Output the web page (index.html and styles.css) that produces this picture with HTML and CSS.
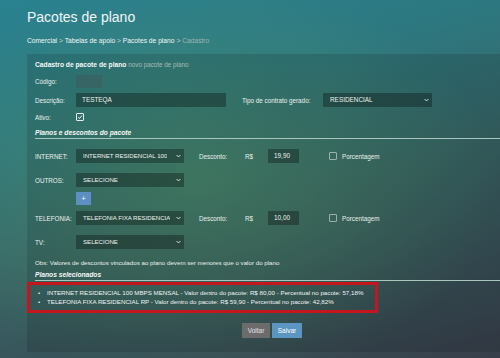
FILE: index.html
```html
<!DOCTYPE html>
<html lang="pt-BR">
<head>
    <meta charset="UTF-8">
    <title>Pacotes de plano - Cadastro</title>
    <link rel="stylesheet" href="styles.css">
</head>
<body>
    <div class="page">
        <h1>Pacotes de plano</h1>
        <div class="breadcrumb">
            <a href="#">Comercial</a> <span class="sep">&gt;</span>
            <a href="#">Tabelas de apoio</a> <span class="sep">&gt;</span>
            <a href="#">Pacotes de plano</a> <span class="sep">&gt;</span>
            <span class="atual">Cadastro</span>
        </div>

        <div class="panel">
            <div class="panel-title">Cadastro de pacote de plano <small>novo pacote de plano</small></div>

            <div class="row row-codigo">
                <label>Código:</label>
                <div class="input input-codigo"></div>
            </div>

            <div class="row row-descricao">
                <label>Descrição:</label>
                <div class="input input-descricao">TESTEQA</div>
                <label class="label-tipo">Tipo de contrato gerado:</label>
                <div class="select select-tipo"><span>RESIDENCIAL</span><svg viewBox="0 0 8 6"><path d="M1 1.5 L4 4.5 L7 1.5"/></svg></div>
            </div>

            <div class="row row-ativo">
                <label>Ativo:</label>
                <span class="check checked"><svg viewBox="0 0 8 8"><path d="M1.5 4.2 L3.3 6 L6.6 2"/></svg></span>
            </div>

            <div class="section-title first">Planos e descontos do pacote</div>

            <div class="row">
                <label>INTERNET:</label>
                <div class="select"><span>INTERNET RESIDENCIAL 100</span><svg viewBox="0 0 8 6"><path d="M1 1.5 L4 4.5 L7 1.5"/></svg></div>
                <label class="label-desconto">Desconto:</label>
                <label class="label-rs">R$</label>
                <div class="input input-valor">19,90</div>
                <span class="check"></span>
                <label class="label-porc">Porcentagem</label>
            </div>

            <div class="row">
                <label>OUTROS:</label>
                <div class="select"><span>SELECIONE</span><svg viewBox="0 0 8 6"><path d="M1 1.5 L4 4.5 L7 1.5"/></svg></div>
            </div>

            <div class="row-add">
                <a href="#" class="btn-add">+</a>
            </div>

            <div class="row row-telefonia">
                <label>TELEFONIA:</label>
                <div class="select"><span>TELEFONIA FIXA RESIDENCIA</span><svg viewBox="0 0 8 6"><path d="M1 1.5 L4 4.5 L7 1.5"/></svg></div>
                <label class="label-desconto">Desconto:</label>
                <label class="label-rs">R$</label>
                <div class="input input-valor">10,00</div>
                <span class="check"></span>
                <label class="label-porc">Porcentagem</label>
            </div>

            <div class="row">
                <label>TV:</label>
                <div class="select"><span>SELECIONE</span><svg viewBox="0 0 8 6"><path d="M1 1.5 L4 4.5 L7 1.5"/></svg></div>
            </div>

            <p class="obs">Obs: Valores de descontos vinculados ao plano devem ser menores que o valor do plano</p>

            <div class="section-title">Planos selecionados</div>

            <ul class="selecionados">
                <li>INTERNET RESIDENCIAL 100 MBPS MENSAL - Valor dentro do pacote: R$ 80,00 - Percentual no pacote: 57,18%</li>
                <li>TELEFONIA FIXA RESIDENCIAL RP - Valor dentro do pacote: R$ 59,90 - Percentual no pacote: 42,82%</li>
            </ul>

            <div class="actions">
                <a href="#" class="btn btn-voltar">Voltar</a>
                <a href="#" class="btn btn-salvar">Salvar</a>
            </div>
        </div>
    </div>
</body>
</html>
```

FILE: styles.css
```css
body {
    margin: 0;
    height: 358px;
    overflow: hidden;
    font-family: "Liberation Sans", Arial, sans-serif;
    color: #eef3ef;
    background:
        radial-gradient(ellipse 300px 200px at 200px 180px, rgba(82, 150, 108, 0.6), transparent),
        linear-gradient(165deg, #2a8290 0%, #2d7880 28%, #386566 55%, #383f4b 100%);
}
.page {
    padding: 10px 0 0 27px;
}
h1 {
    margin: 0;
    font-size: 14px;
    font-weight: normal;
    line-height: 14px;
    color: #f2f6f6;
}
.breadcrumb {
    margin-top: 12px;
    font-size: 6.7px;
    line-height: 10px;
    color: #e6eeee;
}
.breadcrumb a {
    color: #f2f7f7;
    text-decoration: none;
}
.breadcrumb .sep {
    color: #c8d6d6;
}
.breadcrumb .atual {
    color: #9fb3b3;
}

/* painel do formulario */
.panel {
    margin-top: 8px;
    padding: 6px 0 14px 8px;
    background-color: rgba(0, 0, 0, 0.12);
    min-height: 276px;
}
.panel-title {
    font-size: 6.7px;
    font-weight: bold;
    line-height: 10px;
    color: #f6f8f6;
}
.panel-title small {
    font-size: 6.3px;
    font-weight: normal;
    color: #a9bbb4;
}
.row {
    display: flex;
    align-items: center;
    height: 14px;
    margin-top: 10px;
    font-size: 6.3px;
}
.row label {
    color: #eaf0ec;
}
.row > label:first-child {
    width: 41px;
    flex: none;
}
.row-codigo { margin-top: 4px; }
.row-descricao { margin-top: 5px; }
.row-ativo { margin-top: 3px; }
.row-telefonia { margin-top: 6px; }

.input, .select {
    height: 14px;
    box-sizing: border-box;
    background-color: rgba(10, 20, 18, 0.38);
    color: #eef2ee;
    font-size: 6.4px;
    line-height: 14px;
    padding-left: 6px;
}
.input-codigo {
    width: 26px;
    height: 13px;
    background-color: rgba(90, 60, 70, 0.22);
}
.input-descricao {
    width: 150px;
}
.label-tipo {
    margin-left: 16px;
    width: 81px;
}
.select {
    width: 108px;
    display: flex;
    align-items: center;
    justify-content: space-between;
    padding: 0 3px 0 7px;
    white-space: nowrap;
    overflow: hidden;
    font-size: 6.1px;
}
.select span {
    overflow: hidden;
}
.select svg {
    width: 5px;
    height: 4px;
    flex: none;
    margin-left: 2px;
    fill: none;
    stroke: #dfe7e4;
    stroke-width: 1.6;
}
.select-tipo {
    width: 109px;
    padding-left: 7px;
    font-size: 6.4px;
}
.label-desconto {
    margin-left: 15px;
    width: 46px;
}
.label-rs {
    width: 23px;
}
.input-valor {
    width: 31px;
}
.check {
    display: inline-block;
    width: 8px;
    height: 8px;
    box-sizing: border-box;
    border: 1px solid #9fb0aa;
    border-radius: 1px;
}
.row .check {
    margin-left: 30px;
}
.row-ativo .check {
    margin-left: 0;
    border-color: #e8eeea;
}
.check svg {
    display: block;
    width: 6px;
    height: 6px;
    fill: none;
    stroke: #ffffff;
    stroke-width: 1.2;
}
.label-porc {
    margin-left: 5px;
}

.section-title {
    margin-top: 2px;
    font-size: 6.7px;
    font-weight: bold;
    font-style: italic;
    line-height: 10px;
    color: #f6f8f6;
    border-bottom: 1px solid #a9c6bd;
}
.section-title.first {
    margin-top: 4px;
    margin-bottom: 8px;
}
.row-add {
    margin: 5px 0 0 41px;
    height: 13px;
}
.btn-add {
    display: block;
    width: 15px;
    height: 13px;
    background-color: #5e8fc2;
    color: white;
    text-decoration: none;
    text-align: center;
    font-size: 7px;
    line-height: 13px;
}
.obs {
    margin: 9px 0 0;
    font-size: 6.2px;
    line-height: 10px;
    color: #eaf0ec;
}

/* lista de planos selecionados */
.selecionados {
    margin: 1px 0 0 -8px;
    width: 328px;
    padding: 3px 0 4px 17px;
    border: 3px solid #c4161f;
    list-style: none;
    font-size: 6.2px;
    line-height: 9px;
    color: #f0f4f2;
}
.selecionados li::before {
    content: "\2022";
    display: inline-block;
    width: 9px;
    margin-left: -9px;
}

.actions {
    display: flex;
    gap: 2px;
    margin: 10px 0 0 207px;
}
.btn {
    display: inline-block;
    height: 15px;
    line-height: 15px;
    padding: 0 5px;
    font-size: 6.5px;
    color: white;
    text-decoration: none;
    text-align: center;
}
.btn-voltar {
    width: 18px;
    background-color: #6c6c6c;
    color: #e2e2e2;
}
.btn-salvar {
    width: 20px;
    background-color: #5b95c1;
}
```
